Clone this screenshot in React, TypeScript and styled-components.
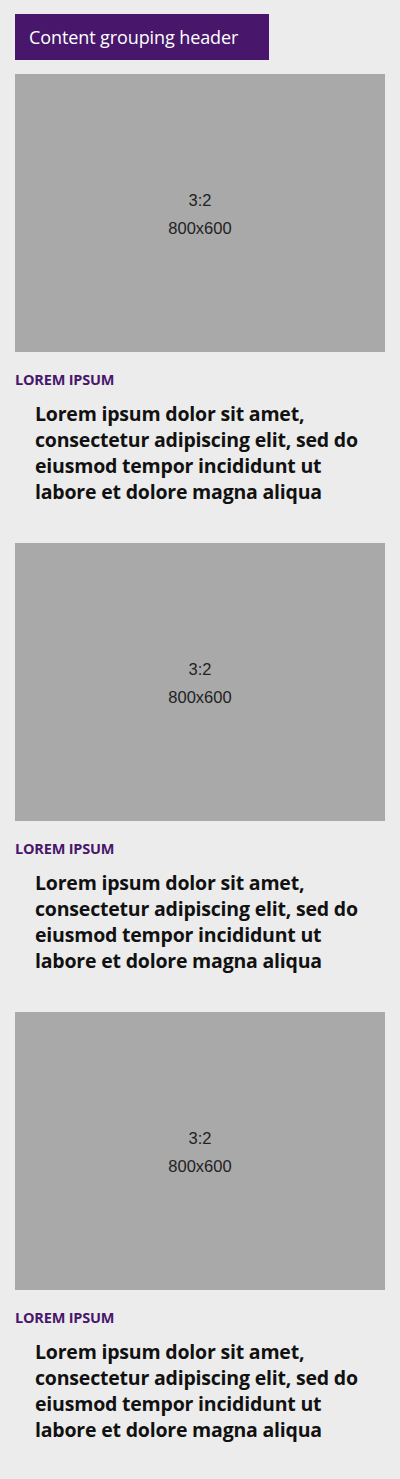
import React from "react";
import styled, { createGlobalStyle } from "styled-components";

const GlobalStyle = createGlobalStyle`
  body {
    margin: 0;
    background: #ececec;
    font-family: "Open Sans", "Noto Sans", sans-serif;
  }
`;

const Page = styled.div`
  padding: 14px 15px 40px;
  box-sizing: border-box;
  width: 400px;
`;

const Header = styled.div`
  display: inline-flex;
  align-items: center;
  width: 254px;
  height: 46px;
  box-sizing: border-box;
  padding: 0 14px;
  background: #48176b;
  color: #fff;
  font-size: 18px;
  letter-spacing: -0.1px;
  margin-bottom: 14px;
`;

const Card = styled.div`
  display: flex;
  flex-direction: column;
  margin-bottom: 38px;
`;

const Placeholder = styled.div`
  height: 278px;
  background: #a9a9a9;
  display: flex;
  flex-direction: column;
  align-items: center;
  justify-content: center;
  gap: 9px;
  font-family: "Liberation Sans", Arial, sans-serif;
  font-size: 16.5px;
  color: #222;
  padding-top: 2px;
  box-sizing: border-box;
`;

const Label = styled.div`
  margin-top: 19px;
  font-size: 14.5px;
  font-weight: 700;
  color: #48176b;
  letter-spacing: -0.2px;
  line-height: 18px;
`;

const Title = styled.h2`
  margin: 12px 0 0 20px;
  font-size: 19.5px;
  font-weight: 700;
  line-height: 26px;
  color: #111;
  letter-spacing: -0.2px;
`;

const items = [1, 2, 3];

function App() {
  return (
    <Page>
      <GlobalStyle />
      <Header>Content grouping header</Header>
      {items.map((i) => (
        <Card key={i}>
          <Placeholder>
            <span>3:2</span>
            <span>800x600</span>
          </Placeholder>
          <Label>LOREM IPSUM</Label>
          <Title>
            Lorem ipsum dolor sit amet,
            <br />
            consectetur adipiscing elit, sed do
            <br />
            eiusmod tempor incididunt ut
            <br />
            labore et dolore magna aliqua
          </Title>
        </Card>
      ))}
    </Page>
  );
}

export default App;
